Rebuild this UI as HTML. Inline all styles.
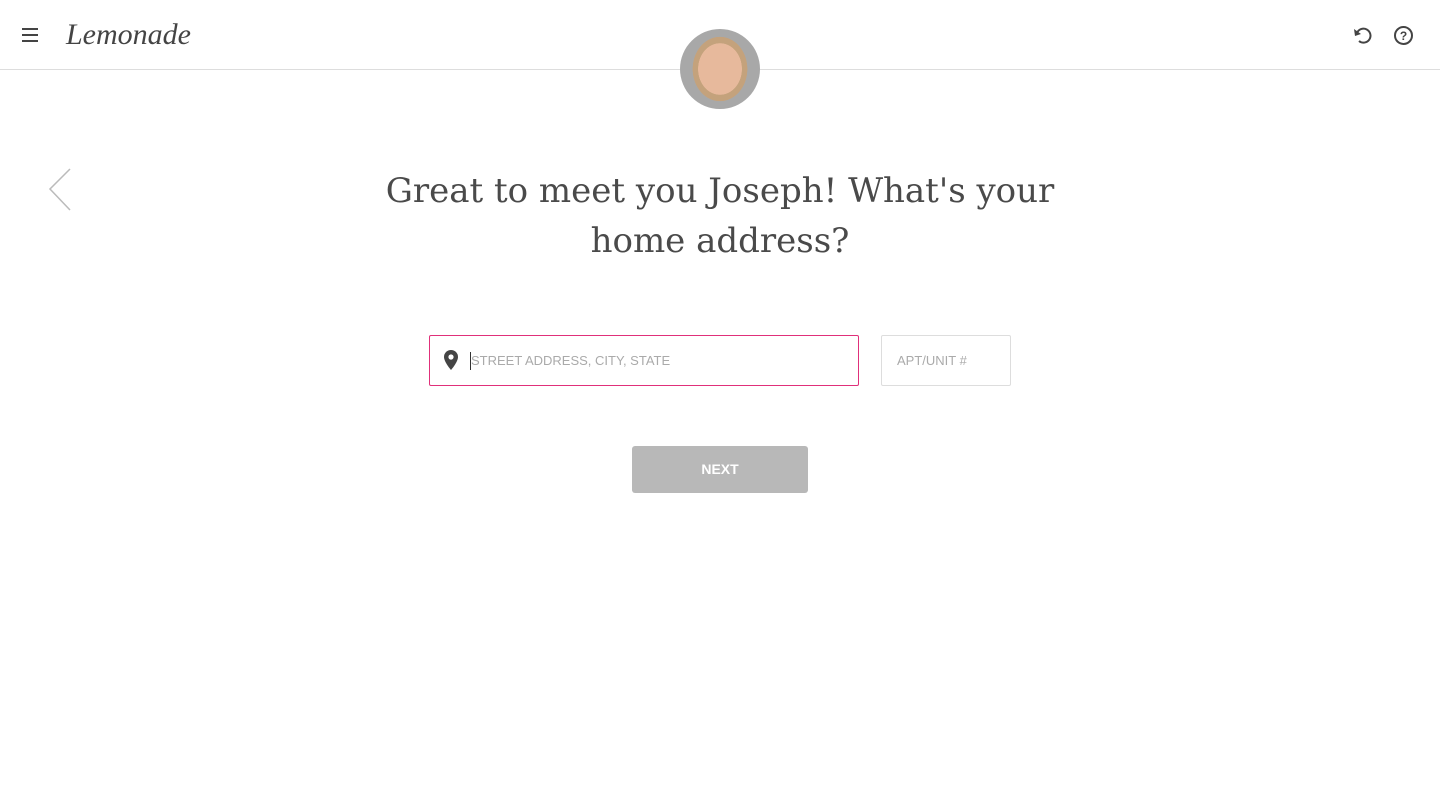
<!DOCTYPE html>
<html><head><meta charset="utf-8"><style>
body{margin:0;width:1440px;height:789px;background:#fff;position:relative;overflow:hidden;font-family:"Liberation Sans",sans-serif}
.hdr{position:absolute;left:0;top:0;width:1440px;height:69px;border-bottom:1px solid #ddd}
.logo{position:absolute;left:66px;top:18px;font-family:"Liberation Serif",serif;font-style:italic;font-size:30px;color:#444}
.av{position:absolute;left:680px;top:29px;width:80px;height:80px;border-radius:50%;background:radial-gradient(ellipse 34% 40% at 50% 50%,#e7b99c 0 80%,#c4a27c 81% 100%,#a8a8a8 101%)}
h1{position:absolute;left:360px;top:166px;width:720px;margin:0;text-align:center;font-family:"DejaVu Serif",serif;font-weight:normal;font-size:34px;line-height:50px;color:#4a4a4a}
.in1{position:absolute;left:429px;top:335px;width:428px;height:49px;border:1px solid #e0307a;border-radius:2px}
.in2{position:absolute;left:881px;top:335px;width:128px;height:49px;border:1px solid #ddd;border-radius:2px}
.ph{position:absolute;font-size:13px;color:#aaa}
.btn{position:absolute;left:632px;top:446px;width:176px;height:47px;background:#b8b8b8;border-radius:3px;color:#fff;font-size:14px;font-weight:bold;text-align:center;line-height:47px}
</style></head><body>
<div class="hdr">
<svg style="position:absolute;left:22px;top:28px" width="16" height="14"><path d="M0 1h16M0 7h16M0 13h16" stroke="#444" stroke-width="2"/></svg>
<div class="logo">Lemonade</div>
<svg style="position:absolute;left:1352px;top:25px" width="22" height="22" viewBox="0 0 22 22"><path d="M5 8A7 7 0 1 1 7 16" fill="none" stroke="#444" stroke-width="2"/><path d="M2 4l1 7 6-2z" fill="#444"/></svg>
<svg style="position:absolute;left:1393px;top:25px" width="21" height="21"><circle cx="10.5" cy="10.5" r="8.5" fill="none" stroke="#444" stroke-width="2"/><text x="10.5" y="15" text-anchor="middle" font-size="12" font-weight="bold" fill="#444" font-family="Liberation Sans">?</text></svg>
</div>
<div class="av"></div>
<svg style="position:absolute;left:48px;top:168px" width="24" height="44"><path d="M22 1L2 21l20 21" fill="none" stroke="#bbb" stroke-width="1.5"/></svg>
<h1>Great to meet you Joseph! What's your home address?</h1>
<div class="in1">
<svg style="position:absolute;left:13px;top:14px" width="16" height="20" viewBox="0 0 16 20"><path d="M8 0a7 7 0 0 0-7 7c0 5 7 13 7 13s7-8 7-13a7 7 0 0 0-7-7z" fill="#444"/><circle cx="8" cy="7" r="2.6" fill="#fff"/></svg>
<div style="position:absolute;left:40px;top:16px;width:1px;height:18px;background:#333"></div>
<div class="ph" style="left:41px;top:17px">STREET ADDRESS, CITY, STATE</div>
</div>
<div class="in2"><div class="ph" style="left:15px;top:17px">APT/UNIT #</div></div>
<div class="btn">NEXT</div>
</body></html>
